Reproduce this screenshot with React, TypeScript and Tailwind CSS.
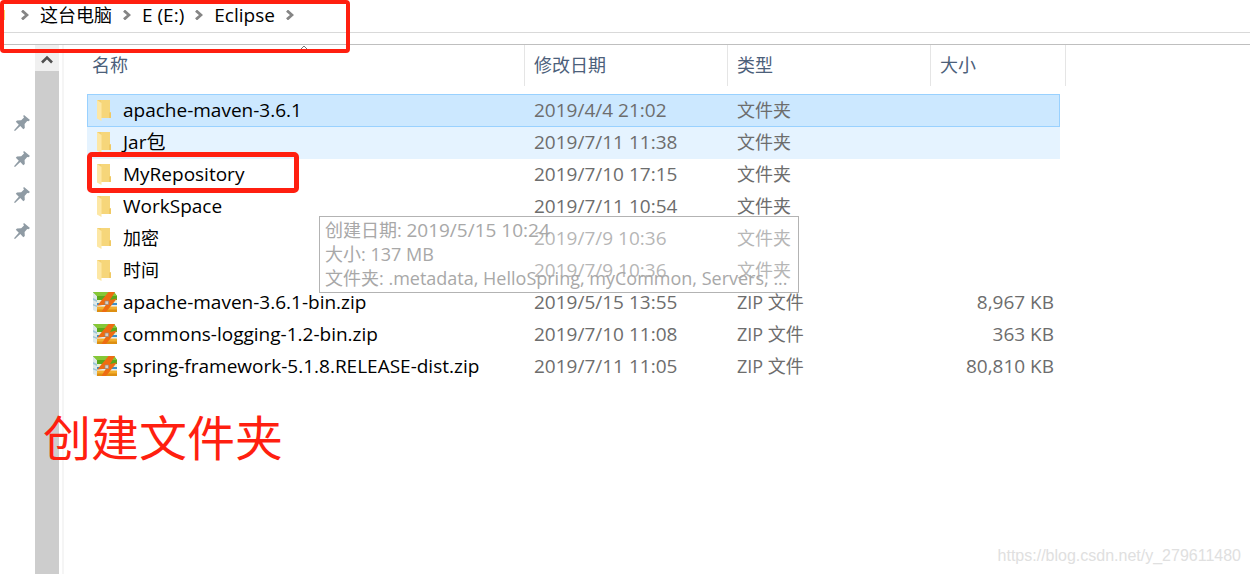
import type { ReactNode } from "react";

type Entry = {
  name: string;
  date: string;
  kind: string;
  size?: string;
  zip?: boolean;
  state?: "selected" | "hover";
  marked?: boolean;
};

const entries: Entry[] = [
  { name: "apache-maven-3.6.1", date: "2019/4/4 21:02", kind: "文件夹", state: "selected" },
  { name: "Jar包", date: "2019/7/11 11:38", kind: "文件夹", state: "hover" },
  { name: "MyRepository", date: "2019/7/10 17:15", kind: "文件夹", marked: true },
  { name: "WorkSpace", date: "2019/7/11 10:54", kind: "文件夹" },
  { name: "加密", date: "2019/7/9 10:36", kind: "文件夹" },
  { name: "时间", date: "2019/7/9 10:36", kind: "文件夹" },
  { name: "apache-maven-3.6.1-bin.zip", date: "2019/5/15 13:55", kind: "ZIP 文件", size: "8,967 KB", zip: true },
  { name: "commons-logging-1.2-bin.zip", date: "2019/7/10 11:08", kind: "ZIP 文件", size: "363 KB", zip: true },
  { name: "spring-framework-5.1.8.RELEASE-dist.zip", date: "2019/7/11 11:05", kind: "ZIP 文件", size: "80,810 KB", zip: true },
];

function Chevron() {
  return (
    <svg viewBox="0 0 8 10" className="h-[10px] w-2 shrink-0" fill="none" stroke="#858585" strokeWidth="2.8" aria-hidden="true">
      <path d="M1 .6 6 5 1 9.400" />
    </svg>
  );
}

function FolderIcon() {
  return (
    <svg viewBox="0 0 24 22" className="h-[22px] w-6 shrink-0" aria-hidden="true">
      <path d="M4 1h13v12l1 1v5H8L4 18z" fill="#f3d06f" />
      <path d="M8 1h9v12l1 1v5H8z" fill="#f6d67a" />
      <path d="M4 1l4.500 3v18L4 19.500z" fill="#fde7a4" />
      <path d="M16 13.500h2V19h-2z" fill="#f0c964" />
    </svg>
  );
}

function ZipIcon() {
  return (
    <svg viewBox="0 0 24 20" className="h-5 w-6 shrink-0" aria-hidden="true">
      <path d="M0 0l4 4v16l-4-2z" fill="#dfe9ea" />
      <path d="M0 6l4 2v2L0 8zM0 12l4 1.500V15l-4-1.500z" fill="#9cc6d8" />
      <path d="M0 0h21l3 4v4H4V4z" fill="#5aa81c" />
      <path d="M0 0h21l3 4H4z" fill="#86c736" />
      <path d="M4 8h20v3H4z" fill="#e9efd4" />
      <path d="M4 11h20v3H4z" fill="#3c8fc9" />
      <path d="M4 13h20v1.500H4z" fill="#e4edf0" />
      <path d="M4 14.500h20V20H4z" fill="#f2ae2c" />
      <path d="M4 17.500h20V20H4z" fill="#dd8f12" />
      <path d="M15.500 0H22l-5 8 7-1.500L13 20H8.500l4.500-7.500-9 1.200z" fill="#ee6c12" />
      <path d="M12 9h3.500v3.500H12z" fill="#d9cfc4" stroke="#9a8a7c" strokeWidth=".7" />
    </svg>
  );
}

function Pin() {
  return (
    <svg viewBox="0 0 16 16" className="size-4" fill="#8f9ba4" aria-hidden="true">
      <path d="M10 0l6 5-1.6 1.2-1.2-.2-2.6 3 .2 4-1.5 1.2-3-3.2L1 16l-1-.8 4.8-5.5-3-2.9L3 5.4l4.2-.1L10 2.4 9.200 1z" />
    </svg>
  );
}

function HeadCell({ children, span }: { children: ReactNode; span?: number }) {
  return (
    <th scope="col" colSpan={span} className="relative h-[41px] border-r border-[#e5e5e5] p-0 pb-[2px] pl-[9px] text-left font-normal first:pl-[5px]">
      {children}
    </th>
  );
}

function Row({ entry }: { entry: Entry }) {
  const selected = entry.state === "selected";
  const tone = selected
    ? "border-y border-[#99d1ff] bg-[#cce8ff]"
    : entry.state === "hover"
      ? "bg-[#e5f3ff]"
      : "";
  const latin = /^[A-Za-z]/.test(entry.name);
  return (
    <tr className={selected ? "h-[33px]" : "h-8"}>
      <td className={`${tone} relative ${selected ? "border-l pl-[5px]" : "pl-[6px]"} py-0 pr-0 pb-[2px] text-black`}>
        <span className="flex items-center gap-[6px]">
          {entry.zip ? <ZipIcon /> : <FolderIcon />}
          <span className={latin ? "text-[19px]" : ""}>{entry.name}</span>
        </span>
        {entry.marked && (
          <span className="absolute -top-[7px] left-0 h-[41px] w-[212px] rounded-[5px] border-5 border-[#ff1f10]" />
        )}
      </td>
      <td className={`${tone} p-0 pb-[2px] pl-[9px] text-[19px]`}>{entry.date}</td>
      <td className={`${tone} p-0 pb-[2px] pl-[9px]`}>{entry.kind}</td>
      <td className={`${tone} ${selected ? "border-r" : ""} p-0 pr-[6px] pb-[2px] text-right text-[19px]`}>{entry.size}</td>
    </tr>
  );
}

export default function App() {
  return (
    <div className="relative flex min-h-screen flex-col overflow-hidden bg-white font-['Open_Sans','Noto_Sans_CJK_SC',sans-serif] text-[18px] leading-6 text-[#6d6d6d]">
      <nav aria-label="路径" className="flex h-[33px] items-center gap-[11px] border-b border-[#d9d9d9] pb-[2px] pl-[3px] text-black">
        <span className="mr-[5px] h-[10px] w-[2px] bg-[#ffd967]" />
        <Chevron />
        <a href="#pc">这台电脑</a>
        <Chevron />
        <a href="#e" className="text-[19px]">E (E:)</a>
        <Chevron />
        <a href="#eclipse" className="text-[19px]">Eclipse</a>
        <Chevron />
      </nav>

      <div className="mt-[11px] flex flex-1 border-t border-[#bfbfbf]">
        <aside className="flex w-[35px] flex-col gap-5 pt-[70px] pl-[14px]">
          <Pin />
          <Pin />
          <Pin />
          <Pin />
        </aside>
        <div className="flex w-6 flex-col bg-[#cdcdcd]">
          <button type="button" aria-label="向上滚动" className="flex h-[26px] items-center justify-center bg-[#f0f0f0] pt-[3px]">
            <svg viewBox="0 0 12 9" className="h-[9px] w-3" fill="none" stroke="#505050" strokeWidth="2.6" aria-hidden="true">
              <path d="M1 7.500l5-5 5 5" />
            </svg>
          </button>
        </div>
        <div className="ml-[3px] w-[2px] bg-[#f5f5f5]" />

        <main className="flex-1 pl-[23px]">
          <table className="w-[979px] table-fixed border-separate border-spacing-0">
            <colgroup>
              <col className="w-[438px]" />
              <col className="w-[203px]" />
              <col className="w-[203px]" />
              <col className="w-[129px]" />
              <col className="w-[6px]" />
            </colgroup>
            <thead className="text-[#4c607a]">
              <tr>
                <HeadCell>
                  名称
                  <svg viewBox="0 0 8 5" className="absolute top-0 left-[213px] h-[5px] w-2" fill="none" stroke="#777" aria-hidden="true">
                    <path d="M.5 4.500 4 1l3.500 3.500" />
                  </svg>
                </HeadCell>
                <HeadCell>修改日期</HeadCell>
                <HeadCell>类型</HeadCell>
                <HeadCell span={2}>大小</HeadCell>
              </tr>
              <tr aria-hidden="true">
                <td colSpan={5} className="h-2 p-0" />
              </tr>
            </thead>
            <tbody>
              {entries.map((entry) => (
                <Row key={entry.name} entry={entry} />
              ))}
            </tbody>
          </table>
        </main>
      </div>

      <div role="tooltip" className="absolute top-[216px] left-[319px] w-[480px] border border-[#b3b3b3] bg-white/50 px-[5px] pt-px pb-[2px] whitespace-nowrap text-[#a8a8a8]">
        <p>
          创建日期: <span className="text-[19px]">2019/5/15 10:24</span>
        </p>
        <p>大小: 137 MB</p>
        <p>文件夹: .metadata, HelloSpring, myCommon, Servers, ...</p>
      </div>

      <div className="absolute top-0 left-0 h-[53px] w-[350px] rounded-[4px] border-4 border-[#ff1f10]" />
      <p className="absolute top-[408px] left-[43px] text-5xl leading-[60px] text-[#ff1f10]">创建文件夹</p>
      <p className="absolute right-[9px] bottom-2 font-['Liberation_Sans',sans-serif] text-base leading-5 text-[#e0e0e0]">
        https://blog.csdn.net/y_279611480
      </p>
    </div>
  );
}
